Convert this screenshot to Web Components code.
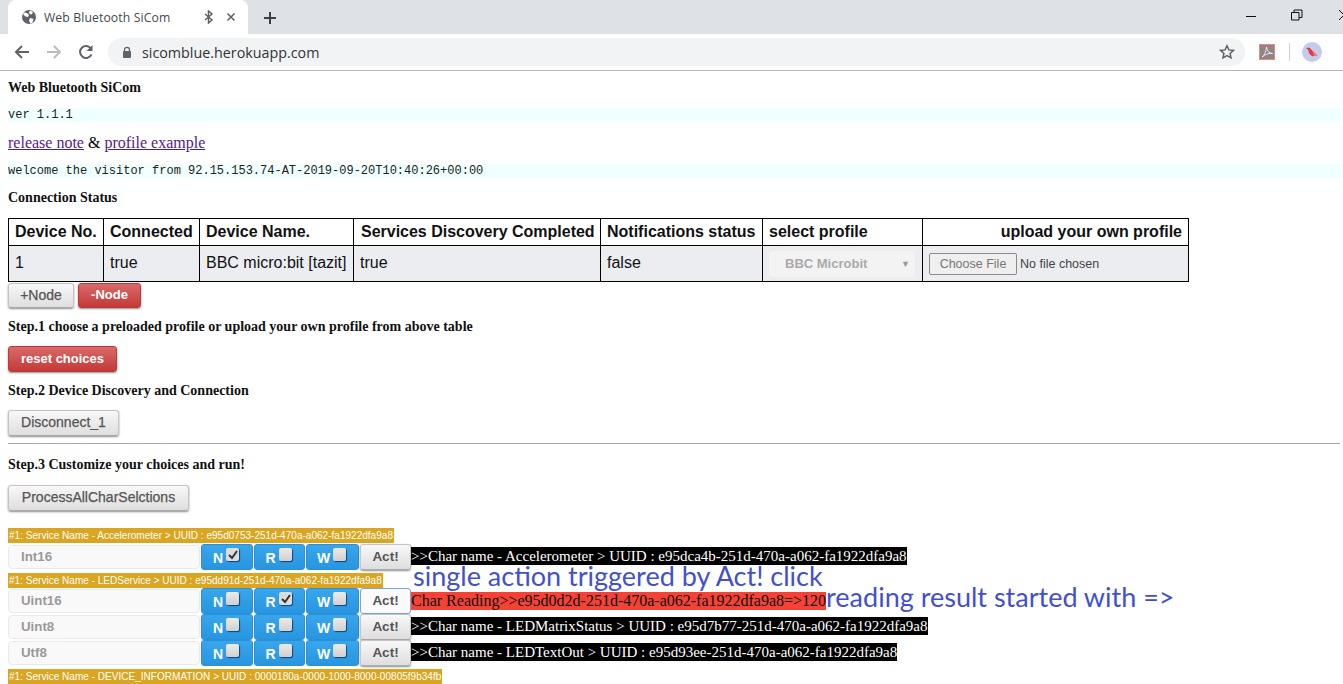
<!DOCTYPE html>
<html>
<head>
<meta charset="utf-8">
<title>Web Bluetooth SiCom</title>
<style>
html,body{margin:0;padding:0;height:684px;overflow:hidden;background:#fff;}
browser-chrome{font-family:"Liberation Serif",serif;}
</style>
</head>
<body>
<browser-chrome tab-title="Web Bluetooth SiCom" url="sicomblue.herokuapp.com">
  <sicom-page></sicom-page>
</browser-chrome>

<script>
class BrowserChrome extends HTMLElement{
    constructor(){
        super();
        const el = this.attachShadow({mode:'open'})
        el.innerHTML = `
        <style>
        :host{display:block;width:1343px;height:684px;overflow:hidden;position:relative;}
        .strip{height:34px;background:#dee1e6;display:flex;align-items:flex-end;padding-left:8px;position:relative;}
        .tab{width:240px;height:34px;background:#fff;border-radius:8px 8px 0 0;display:flex;align-items:center;box-sizing:border-box;padding-left:13px;font:12.2px "Open Sans",sans-serif;color:#45494d;}
        .tab .title{margin-left:7px;width:151px;white-space:nowrap;letter-spacing:.12px;}
        .tab svg{flex:none;}
        .plus{margin-bottom:9px;}
        .win{margin-left:auto;display:flex;align-self:flex-start;}
        .win div{width:46px;height:30px;display:flex;align-items:center;justify-content:center;}
        .tools{height:36px;background:#fff;border-bottom:1px solid #b6b6b6;display:flex;align-items:center;box-sizing:content-box;}
        .nav{display:flex;align-items:center;width:108px;padding-left:13px;box-sizing:border-box;gap:14px;}
        .omni{width:1137px;height:28px;border-radius:14px;background:#f1f3f4;display:flex;align-items:center;padding-left:14px;box-sizing:border-box;font:14.3px "Open Sans",sans-serif;color:#303336;}
        .omni .url{margin-left:10px;flex:1;}
        .omni .star{margin-right:10px;}
        .ext{display:flex;align-items:center;margin-left:14px;}
        .pdf{width:16px;height:16px;background:#8f8583;border:1px solid #e58b7e;box-sizing:border-box;display:flex;}
        .sep{width:1px;height:18px;background:#d0d0d0;margin:0 12px 0 14px;}
        .avatar{width:20px;height:20px;border-radius:50%;background:#c5cbea;display:flex;align-items:center;justify-content:center;}
        </style>
        <div class="strip">
          <div class="tab">
            <svg width="16" height="16" viewBox="0 0 16 16"><circle cx="8" cy="8" r="7" fill="#5f6368"/><path d="M3 3.500l3 .5 2 2-1 2-2.500-.5L2 5zM9 1.500l3 1.500-1 2-2 .5-1-2zM9 9l3.500 1-1 3.500-2 1.200L8 11.500z" fill="#fff"/></svg>
            <span class="title">${this.getAttribute('tab-title')}</span>
            <svg width="10" height="14" viewBox="0 0 10 14" style="margin-left:9px"><path d="M1 4l7 6-3.500 3V1L8 4l-7 6" fill="none" stroke="#5f6368" stroke-width="1.500"/></svg>
            <svg width="10" height="10" viewBox="0 0 10 10" style="margin-left:12px"><path d="M1.500 1.500l7 7M8.500 1.500l-7 7" stroke="#5f6368" stroke-width="1.600"/></svg>
          </div>
          <svg class="plus" width="14" height="14" viewBox="0 0 14 14" style="margin-left:15px"><path d="M7 1v12M1 7h12" stroke="#3c4043" stroke-width="2"/></svg>
          <div class="win">
            <div><svg width="12" height="12" viewBox="0 0 12 12"><path d="M1 7.500h10" stroke="#111" stroke-width="1"/></svg></div>
            <div><svg width="12" height="12" viewBox="0 0 12 12"><path d="M.5 3.500h7.500v7.500H.5zM3 3.500V1h8v7.500H8" fill="none" stroke="#111" stroke-width="1"/></svg></div>
            <div style="width:23px;justify-content:flex-start;padding-left:18px;box-sizing:border-box"><svg width="12" height="12" viewBox="0 0 12 12" style="flex:none"><path d="M1 1l10 10M11 1L1 11" stroke="#111" stroke-width="1"/></svg></div>
          </div>
        </div>
        <div class="tools">
          <div class="nav">
            <svg width="18" height="18" viewBox="0 0 18 18"><path d="M16 9H3M9 3L3 9l6 6" fill="none" stroke="#5f6368" stroke-width="2"/></svg>
            <svg width="18" height="18" viewBox="0 0 18 18"><path d="M2 9h13M9 3l6 6-6 6" fill="none" stroke="#b9bcc0" stroke-width="2"/></svg>
            <svg width="18" height="18" viewBox="0 0 18 18"><path d="M14.500 11.500A6 6 0 1 1 14 5.500" fill="none" stroke="#5f6368" stroke-width="2"/><path d="M15.500 2v6h-6z" fill="#5f6368"/></svg>
          </div>
          <div class="omni">
            <svg width="10" height="13" viewBox="0 0 10 13"><path d="M2.500 5.500V3.800a2.500 2.500 0 0 1 5 0v1.700" fill="none" stroke="#5f6368" stroke-width="1.300"/><rect x="1" y="5" width="8" height="7" rx="1" fill="#5f6368"/></svg>
            <span class="url">${this.getAttribute('url')}</span>
            <svg class="star" width="16" height="16" viewBox="0 0 16 16"><path d="M8 1.800l1.900 4.100 4.500.5-3.300 3 .9 4.400L8 11.600l-4 2.200.9-4.400-3.300-3 4.500-.5z" fill="none" stroke="#5f6368" stroke-width="1.500"/></svg>
          </div>
          <div class="ext">
            <div class="pdf"><svg width="14" height="14" viewBox="0 0 14 14"><path d="M2 12c2-1 4-5 4.500-10 .5 4 2.500 6 6 6.500-3-.5-7 .5-10.500 3.500" fill="none" stroke="#eee" stroke-width="1"/></svg></div>
            <div class="sep"></div>
            <div class="avatar"><svg width="14" height="12" viewBox="0 0 14 12"><path d="M1 2.500L3 1.500l2 .5 2.500 3 5 4.500H9l-1.500 1-3-2.500L3 3.500z" fill="#e8373f"/><path d="M7.500 5l5 4.500H9z" fill="#f77a70"/></svg></div>
          </div>
        </div>
        <slot></slot>`
    }
}
customElements.define('browser-chrome', BrowserChrome)

class UiButton extends HTMLElement{
    constructor(){
        super();
        const el = this.attachShadow({mode:'open'})
        el.innerHTML = `
        <style>
        :host{display:inline-flex;box-sizing:border-box;height:26px;align-items:center;justify-content:center;padding:0 0 2px;border-radius:3px;
          font:14px "Liberation Sans",sans-serif;color:#555;white-space:nowrap;-webkit-text-stroke:.25px #555;
          background:linear-gradient(#f8f8f8,#dedede);border:1px solid #c4c4c4;border-bottom-color:#aaa;box-shadow:0 1px 2px rgba(0,0,0,.45);}
        :host([red]){background:linear-gradient(#d96a68,#c23a38);border-color:#c0393a;color:#fff;font-weight:bold;font-size:13px;-webkit-text-stroke:0;}
        :host([act]){width:51px;font-weight:bold;font-size:13.500px;color:#555;-webkit-text-stroke:0;}
        :host([focus]){background:#fafafa;border:1px solid #7da2e0;box-shadow:none;}
        </style>
        <slot></slot>`
    }
}
customElements.define('ui-button', UiButton)

class ServiceLabel extends HTMLElement{
    constructor(){
        super();
        const el = this.attachShadow({mode:'open'})
        el.innerHTML = `
        <style>
        :host{display:block;height:15px;margin:0;}
        span{display:block;width:fit-content;background:#daa520;color:#fff;font:10.05px/15px "Liberation Sans",sans-serif;padding:0 1px;white-space:nowrap;}
        </style>
        <span><slot></slot></span>`
    }
}
customElements.define('service-label', ServiceLabel)

class CharRow extends HTMLElement{
    constructor(){
        super();
        const el = this.attachShadow({mode:'open'})
        const checked = (this.getAttribute('checked') || '')
        const toggle = (l) => `
          <div class="tg ${l}"><b>${l}</b><i class="${checked === l ? 'on' : ''}">${checked === l ? `<svg width="14" height="14" viewBox="0 0 14 14"><path d="M3 7l3 3 5-7" fill="none" stroke="#333" stroke-width="2"/></svg>` : ''}</i></div>`
        el.innerHTML = `
        <style>
        :host{display:flex;height:26px;align-items:center;position:relative;}
        .type{width:192px;height:24px;box-sizing:border-box;background:#f9f9f9;border:1px solid #e9e9e9;border-radius:4px;padding-left:12px;font:bold 13.3px/22px "Liberation Sans",sans-serif;color:#999;flex:none;}
        .tg{height:26px;box-sizing:border-box;background:linear-gradient(#38a6ec,#2895e0);border:1px solid #2a8fd8;border-radius:3px;display:flex;align-items:flex-start;justify-content:center;gap:3px;padding:3px 2px 0 0;margin-right:1px;color:#fff;flex:none;}
        .tg.N{width:52px;margin-left:1px;}
        .tg.R{width:51px;}
        .tg.W{width:53px;}
        .tg b{font:bold 14px/16px "Liberation Sans",sans-serif;margin-top:2px;}
        .tg i{display:block;width:13px;height:13px;background:linear-gradient(#ebebeb,#d0d0d0);border-radius:2px;box-shadow:1px 1px 1px rgba(0,40,80,.75);}
        .tg i.on{background:#ddd;}
        .tg i svg{display:block;}
        .res{font:16px/18px "Liberation Serif",serif;white-space:nowrap;display:flex;align-items:flex-start;margin-bottom:2px;}
        </style>
        <div class="type">${this.getAttribute('type')}</div>
        ${toggle('N')}${toggle('R')}${toggle('W')}
        <ui-button act ${this.hasAttribute('focus') ? 'focus' : ''}>Act!</ui-button>
        <div class="res"><slot></slot></div>`
    }
}
customElements.define('char-row', CharRow)

class ResultText extends HTMLElement{
    constructor(){
        super();
        const el = this.attachShadow({mode:'open'})
        el.innerHTML = `
        <style>
        :host{display:inline-block;background:#000;color:#fff;font:15px/18px "Liberation Serif",serif;}
        :host([reading]){background:#f44336;color:#111;font-size:16px;position:relative;top:1px;}
        </style>
        <slot></slot>`
    }
}
customElements.define('result-text', ResultText)

class StatusTable extends HTMLElement{
    constructor(){
        super();
        const el = this.attachShadow({mode:'open'})
        el.innerHTML = `
        <style>
        :host{display:block;width:1181px;}
        table{border-collapse:collapse;table-layout:fixed;width:1181px;font:16px "Liberation Sans",sans-serif;color:#111;}
        th,td{border:1px solid #000;padding:0 6px;text-align:left;white-space:nowrap;}
        th{height:26px;font-weight:bold;background:#fff;}
        td{height:36px;background:#ebedf1;padding-bottom:2px;box-sizing:border-box;}
        .right{text-align:right;}
        .disc{padding-left:7px;letter-spacing:-.01px;}
        .sel{display:flex;align-items:center;justify-content:space-between;width:146px;height:26px;box-sizing:border-box;background:#f3f3f3;border-radius:3px;padding:0 5px 0 16px;font:bold 13px "Liberation Sans",sans-serif;color:#aaa;margin-top:2px;}
        .sel span{font-size:9px;color:#999;}
        .file{display:flex;align-items:center;font:12.500px "Liberation Sans",sans-serif;color:#444;margin-top:2px;}
        .file button{width:88px;height:22px;padding:0;background:#efefef;border:1px solid #8a8a8a;border-radius:2px;font:12.500px "Liberation Sans",sans-serif;color:#777;margin-right:3px;}
        </style>
        <table>
          <colgroup><col style="width:95px"><col style="width:96px"><col style="width:154px"><col style="width:247px"><col style="width:162px"><col style="width:160px"><col style="width:266px"></colgroup>
          <tr><th>Device No.</th><th>Connected</th><th>Device Name.</th><th class="disc">Services Discovery Completed</th><th>Notifications status</th><th>select profile</th><th class="right">upload your own profile</th></tr>
          <tr><td>1</td><td>true</td><td>BBC micro:bit [tazit]</td><td>true</td><td>false</td>
            <td><div class="sel">BBC Microbit<span>&#9660;</span></div></td>
            <td><div class="file"><button disabled>Choose File</button>No file chosen</div></td></tr>
        </table>`
    }
}
customElements.define('status-table', StatusTable)

class SicomPage extends HTMLElement{
    constructor(){
        super();
        const el = this.attachShadow({mode:'open'})
        el.innerHTML = `
        <style>
        :host{display:block;padding:9px 0 0 8px;font-family:"Liberation Serif",serif;color:#000;position:relative;}
        h4{font:bold 14px/16px "Liberation Serif",serif;margin:0;color:#111;}
        .band{background:#f0ffff;font:12px/14px "Liberation Mono",monospace;color:#222;white-space:pre;}
        .links{font:16px/18px "Liberation Serif",serif;margin-top:12px;}
        a{color:#551a8b;}
        .btns{display:flex;gap:4px;margin-top:1px;}
        .btns ui-button{height:25px;}
        .block{display:flex;}
        hr{margin:7px 3px 0 0;border:0;height:1px;background:#a8a8a8;}
        .note{font:27px/22px "Lato",sans-serif;color:#4250d0;white-space:nowrap;}
        .inline-note{margin-top:-5px;}
        .chars{margin-top:17px;position:relative;}
        .over{position:absolute;left:405px;top:37px;}
        </style>
        <h4>Web Bluetooth SiCom</h4>
        <div class="band" style="margin-top:12px">ver 1.1.1</div>
        <div class="links"><a href="#">release note</a> &amp; <a href="#">profile example</a></div>
        <div class="band" style="margin-top:12px">welcome the visitor from 92.15.153.74-AT-2019-09-20T10:40:26+00:00</div>
        <h4 style="margin-top:12px">Connection Status</h4>
        <status-table style="margin-top:12px"></status-table>
        <div class="btns"><ui-button style="width:66px">+Node</ui-button><ui-button red style="width:63px">-Node</ui-button></div>
        <h4 style="margin-top:11px">Step.1 choose a preloaded profile or upload your own profile from above table</h4>
        <div class="block" style="margin-top:11px"><ui-button red style="width:109px">reset choices</ui-button></div>
        <h4 style="margin-top:11px">Step.2 Device Discovery and Connection</h4>
        <div class="block" style="margin-top:11px"><ui-button style="width:111px">Disconnect_1</ui-button></div>
        <hr>
        <h4 style="margin-top:13px">Step.3 Customize your choices and run!</h4>
        <div class="block" style="margin-top:12px"><ui-button style="width:181px">ProcessAllCharSelctions</ui-button></div>
        <div class="chars">
          <service-label>#1: Service Name - Accelerometer &gt; UUID : e95d0753-251d-470a-a062-fa1922dfa9a8</service-label>
          <char-row type="Int16" checked="N" style="margin-top:1px"><result-text>&gt;&gt;Char name - Accelerometer &gt; UUID : e95dca4b-251d-470a-a062-fa1922dfa9a8</result-text></char-row>
          <service-label style="margin-top:3px">#1: Service Name - LEDService &gt; UUID : e95dd91d-251d-470a-a062-fa1922dfa9a8</service-label>
          <char-row type="Uint16" checked="R" focus><result-text reading>Char Reading&gt;&gt;e95d0d2d-251d-470a-a062-fa1922dfa9a8=&gt;120</result-text><span class="note inline-note">reading result started with =&gt;</span></char-row>
          <char-row type="Uint8"><result-text>&gt;&gt;Char name - LEDMatrixStatus &gt; UUID : e95d7b77-251d-470a-a062-fa1922dfa9a8</result-text></char-row>
          <char-row type="Utf8"><result-text>&gt;&gt;Char name - LEDTextOut &gt; UUID : e95d93ee-251d-470a-a062-fa1922dfa9a8</result-text></char-row>
          <service-label style="margin-top:3px">#1: Service Name - DEVICE_INFORMATION &gt; UUID : 0000180a-0000-1000-8000-00805f9b34fb</service-label>
          <div class="note over">single action triggered by Act! click</div>
        </div>`
    }
}
customElements.define('sicom-page', SicomPage)
</script>
</body>
</html>
